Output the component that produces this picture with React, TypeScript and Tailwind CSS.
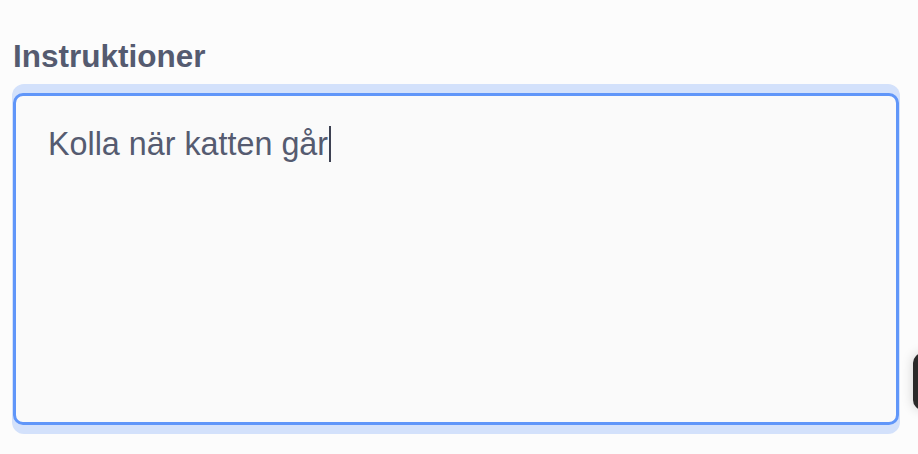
import React from "react";

export default function App() {
  return (
    <div className="relative w-[918px] h-[454px] overflow-hidden bg-[#fcfcfc]" style={{ fontFamily: '"Liberation Sans", Arial, sans-serif' }}>
      <div className="pl-[13px] pt-[38px]">
        <div className="text-[31.5px] leading-[36px] font-bold text-[#555b70]">Instruktioner</div>
      </div>
      <div className="ml-[12px] mt-[10px] w-[888px] rounded-[12px] bg-[#d3e1fb] px-[1px] py-[9px]">
        <div className="h-[332px] rounded-[10px] border-[3px] border-[#6096f9] bg-[#fafafa] pl-[32px] pt-[30px]">
          <div className="flex items-center text-[32.3px] leading-[36px] text-[#555b70]">
            <span>Kolla när katten går</span>
            <span className="ml-[1px] inline-block h-[36px] w-[2px] bg-[#3d4152]" />
          </div>
        </div>
      </div>
      <div className="absolute left-[913px] top-[353px] h-[57px] w-[24px] rounded-[10px] bg-[#2a2a2a] shadow-[0_0_12px_rgba(0,0,0,0.18)]" />
    </div>
  );
}
